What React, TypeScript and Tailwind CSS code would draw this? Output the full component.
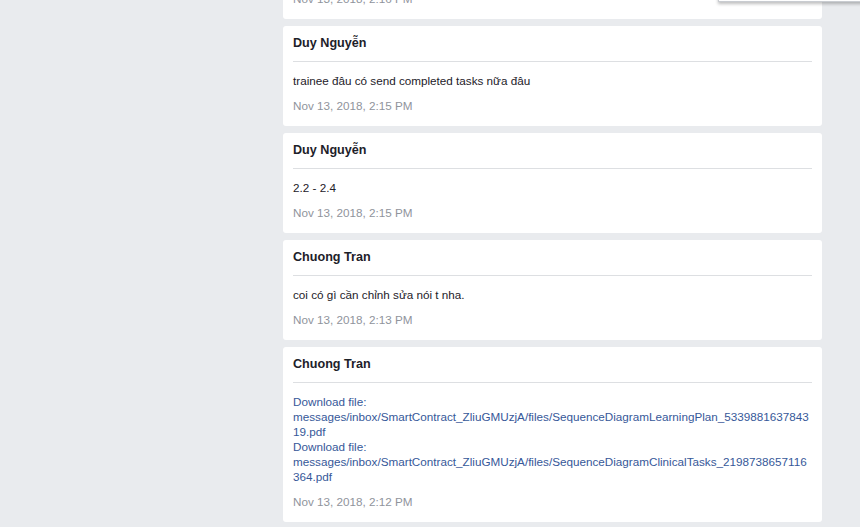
import React from "react";

type Msg = {
  name: string;
  time: string;
  text?: string;
  links?: string[];
};

const msgs: Msg[] = [
  { name: "Duy Nguyễn", time: "Nov 13, 2018, 2:16 PM", text: "ok" },
  { name: "Duy Nguyễn", time: "Nov 13, 2018, 2:15 PM", text: "trainee đâu có send completed tasks nữa đâu" },
  { name: "Duy Nguyễn", time: "Nov 13, 2018, 2:15 PM", text: "2.2 - 2.4" },
  { name: "Chuong Tran", time: "Nov 13, 2018, 2:13 PM", text: "coi có gì cần chỉnh sửa nói t nha." },
  {
    name: "Chuong Tran",
    time: "Nov 13, 2018, 2:12 PM",
    links: [
      "messages/inbox/SmartContract_ZliuGMUzjA/files/SequenceDiagramLearningPlan_533988163784319.pdf",
      "messages/inbox/SmartContract_ZliuGMUzjA/files/SequenceDiagramClinicalTasks_2198738657116364.pdf",
    ],
  },
];

function Card({ m, first }: { m: Msg; first?: boolean }) {
  return (
    <div
      className={
        "bg-white rounded-[3px] px-[10px] pt-[9px] pb-[13px] " + (first ? "mt-[-81px]" : "")
      }
    >
      <div className="text-[12.6px] font-bold leading-[16px] text-[#1d2129] pb-[10px] border-b border-[#dddfe2]">
        {m.name}
      </div>
      {m.text && (
        <div className="mt-[11px] text-[11.7px] leading-[15px] text-[#1d2129]">{m.text}</div>
      )}
      {m.links && (
        <div className="mt-[11px] text-[11.7px] leading-[15px] text-[#365899] break-words">
          {m.links.map((l, i) => (
            <a key={i} className="block" href="#">
              Download file: {l}
            </a>
          ))}
        </div>
      )}
      <div className="mt-[10px] text-[11.7px] leading-[15px] text-[#90949c]">{m.time}</div>
    </div>
  );
}

export default function App() {
  return (
    <div
      className="relative w-[860px] h-[527px] overflow-hidden bg-[#e9ebee]"
      style={{ fontFamily: '"Liberation Sans", Arial, sans-serif' }}
    >
      <div className="ml-[283px] w-[539px] flex flex-col gap-[7px]">
        {msgs.map((m, i) => (
          <Card key={i} m={m} first={i === 0} />
        ))}
      </div>
      <div className="absolute left-[718px] top-[-40px] w-[200px] h-[42px] bg-white border border-[#c9ccd1] shadow-[0_2px_3px_rgba(0,0,0,0.25)]" />
    </div>
  );
}
